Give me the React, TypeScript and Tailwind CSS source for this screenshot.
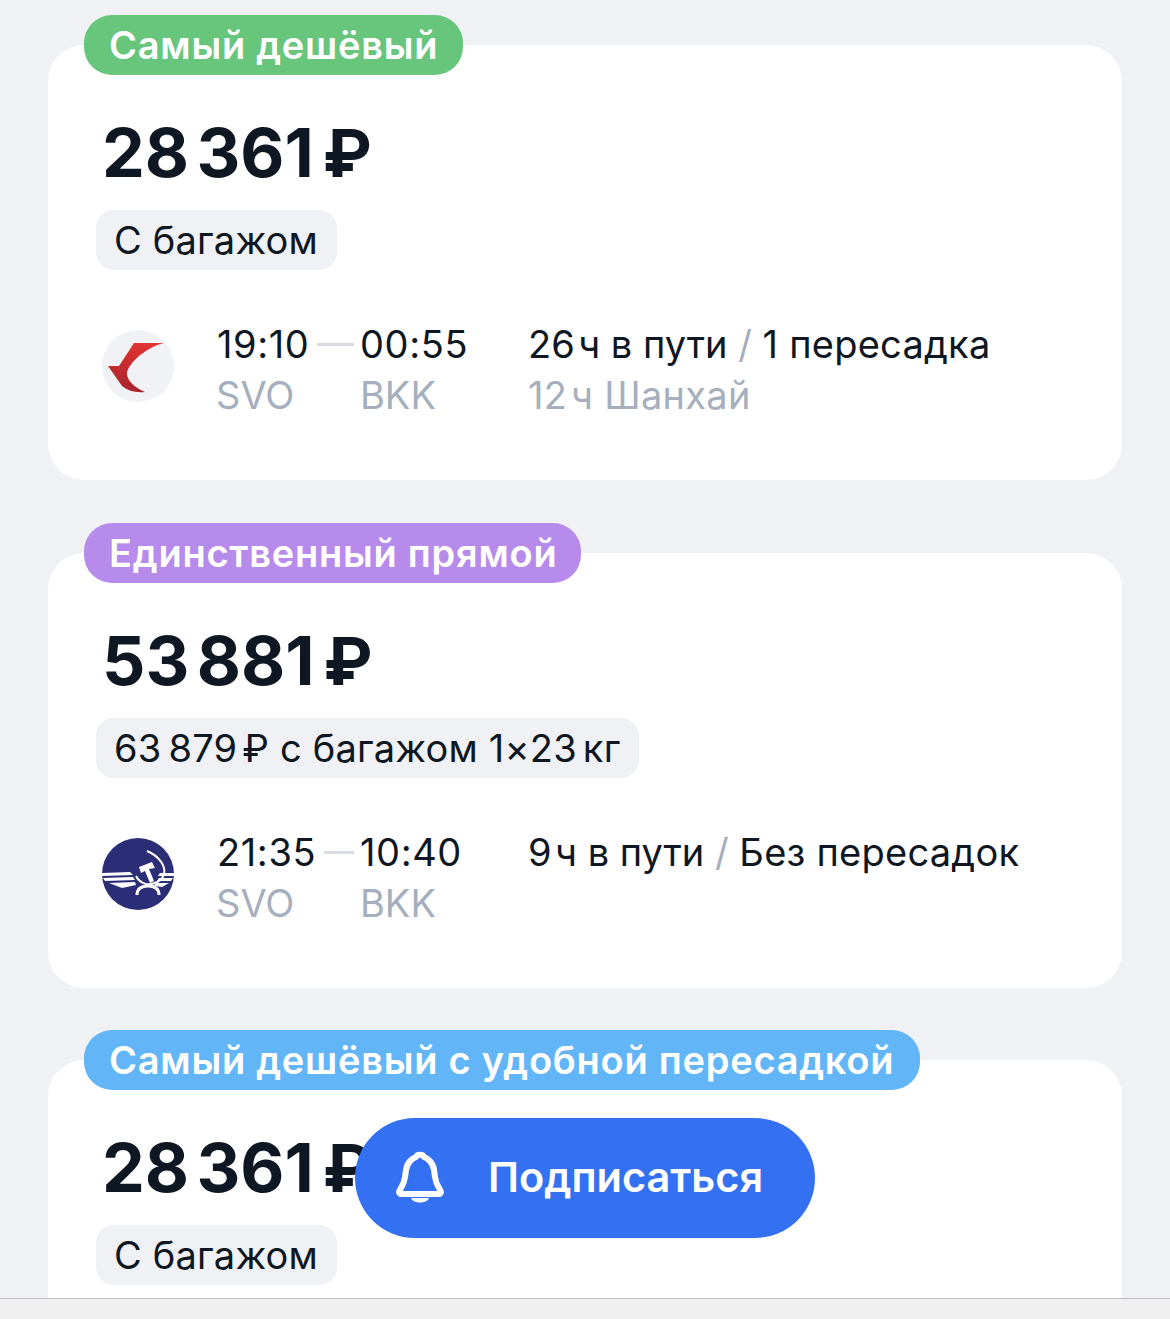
import type { ReactNode } from 'react'

// ─── Airline logos ────────────────────────────────────────────────────────────

function ChinaEasternLogo() {
  return (
    <svg viewBox="0 0 72 72" className="w-[72px] h-[72px] shrink-0">
      <defs>
        <linearGradient id="ce" x1="0.6" y1="0" x2="0.4" y2="1">
          <stop offset="0" stopColor="#e23431" />
          <stop offset="1" stopColor="#a8242c" />
        </linearGradient>
      </defs>
      <circle cx="36" cy="36" r="36" fill="#f1f2f5" />
      <path
        d="M 32 13 L 62 13 C 49 16 30 28 25 42 C 24 50 33 58 43 62 C 34 63 26 61 20 56 L 6 36 L 17 36 Z"
        fill="url(#ce)"
      />
    </svg>
  )
}

function AeroflotLogo() {
  return (
    <svg viewBox="0 0 72 72" className="w-[72px] h-[72px] shrink-0">
      <circle cx="36" cy="36" r="36" fill="#2b2d77" />
      {/* Wings */}
      <path d="M0 35 L28 34 L31 37 L0 38 Z" fill="#fff" />
      <path d="M1 40 L31 39 L33 42 L3 43 Z" fill="#fff" />
      <path d="M7 45 L33 44 L34 47 L20 50 Z" fill="#fff" />
      <path d="M72 35 L58 35 L56 38 L72 38 Z" fill="#fff" />
      <path d="M71 40 L57 40 L55 43 L69 43 Z" fill="#fff" />
      <path d="M67 45 L54 45 L52 48 L60 49 Z" fill="#fff" />
      {/* Sickle */}
      <path d="M45 13 C57 18 64 28 62 36 C60 43 52 47 44 46 C40 45 36 42 34 38" fill="none" stroke="#fff" strokeWidth="2" />
      {/* Hammer */}
      <path d="M37 29 L50 24 L53 30 L47 31 L52 43 L48 45 L43 33 L39 35 Z" fill="#fff" />
      {/* Arch */}
      <path d="M35 57 C35 51 39 48 46 48 C53 48 57 51 57 57" fill="none" stroke="#fff" strokeWidth="3" />
    </svg>
  )
}

// ─── Flight card ──────────────────────────────────────────────────────────────

type Flight = {
  logo: ReactNode
  depart: string
  arrive: string
  duration: string
  stops: string
  layover?: string
}

type Offer = {
  label: string
  labelColor: string
  labelWidth: string
  price: [string, string]
  tag: ReactNode
  flight?: Flight
}

function FlightRow({ flight }: { flight: Flight }) {
  return (
    <div className="flex items-start pl-[54px] pt-[49px] h-[210px] text-[38px] leading-[51px]">
      <div className="mt-[11px]">{flight.logo}</div>
      <div className="ml-[43px] w-[144px] pr-[7px]">
        <div className="flex items-center gap-[8px] text-[#0f1722]">
          <span className="tracking-[0.6px]">{flight.depart}</span>
          <span className="flex-1 h-[3px] bg-[#d8dce2]" />
        </div>
        <div className="text-[#a5afbd] -ml-px">SVO</div>
      </div>
      <div className="w-[168px] -ml-px">
        <div className="text-[#0f1722] tracking-[0.6px]">{flight.arrive}</div>
        <div className="text-[#a5afbd]">BKK</div>
      </div>
      <div>
        <div className="text-[#0f1722] whitespace-nowrap">
          {flight.duration} в пути <span className="text-[#a5afbd]">/</span>{' '}
          <span className="tracking-[0.25px]">{flight.stops}</span>
        </div>
        {flight.layover && <div className="text-[#a5afbd] tracking-[0.3px]">{flight.layover}</div>}
      </div>
    </div>
  )
}

function OfferCard({ offer }: { offer: Offer }) {
  return (
    <div className="relative bg-white rounded-[36px] h-[435px]">
      <div
        className={`absolute left-[36px] -top-[30px] h-[60px] rounded-[28px] pl-[25px] text-white font-semibold tracking-[0.75px] text-[38px] leading-[60px] whitespace-nowrap ${offer.labelColor} ${offer.labelWidth}`}
      >
        {offer.label}
      </div>
      <div className="pl-[54px] pt-[66px] text-[68px] leading-[82px] font-bold text-[#0f1722] whitespace-nowrap">
        {offer.price[0]}
        <span className="ml-[2px]">{offer.price[1]}</span>
        <span className="ml-[9px] text-[66px]">₽</span>
      </div>
      <div className="ml-[48px] mt-[16px] inline-block h-[60px] rounded-[18px] bg-[#eff1f5] pl-[18px] pr-[19px] text-[38px] tracking-[0.2px] leading-[60px] text-[#0f1722] whitespace-nowrap">
        {offer.tag}
      </div>
      {offer.flight && <FlightRow flight={offer.flight} />}
    </div>
  )
}

// ─── Page ─────────────────────────────────────────────────────────────────────

const OFFERS: Offer[] = [
  {
    label: 'Самый дешёвый',
    labelColor: 'bg-[#67c57c]',
    labelWidth: 'w-[379px]',
    price: ['28\u200A', '361'],
    tag: 'С багажом',
    flight: {
      logo: <ChinaEasternLogo />,
      depart: '19:10',
      arrive: '00:55',
      duration: '26\u200Aч',
      stops: '1 пересадка',
      layover: '12\u200Aч Шанхай',
    },
  },
  {
    label: 'Единственный прямой',
    labelColor: 'bg-[#b68bec]',
    labelWidth: 'w-[497px]',
    price: ['53\u200A', '881'],
    tag: (
      <>
        63<span className="ml-[7px]">879</span>
        <span className="ml-[5px]">₽</span> с багажом 1×23
        <span className="ml-[6px]">кг</span>
      </>
    ),
    flight: {
      logo: <AeroflotLogo />,
      depart: '21:35',
      arrive: '10:40',
      duration: '9\u200Aч',
      stops: 'Без пересадок',
    },
  },
  {
    label: 'Самый дешёвый с удобной пересадкой',
    labelColor: 'bg-[#62b6f7]',
    labelWidth: 'w-[836px]',
    price: ['28\u200A', '361'],
    tag: 'С багажом',
  },
]

export default function App() {
  return (
    <div className="relative flex flex-col h-[1319px] overflow-hidden bg-[#eff1f5] font-['Inter',sans-serif]">
      <div className="flex-1 overflow-hidden px-[48px] pt-[45px]">
        <div className="flex flex-col gap-[72.5px]">
          {OFFERS.map((offer) => (
            <OfferCard key={offer.label} offer={offer} />
          ))}
        </div>
      </div>

      <div className="h-[21px] shrink-0 border-t border-[#bfbfc2] bg-[#f0f0f1]" />

      {/* Subscribe button */}
      <div className="absolute left-[355px] top-[1118px] w-[460px] h-[120px] rounded-full bg-[#3371f2] flex items-center text-white">
        <svg viewBox="0 0 48 54" className="ml-[41px] w-[48px] h-[54px]" fill="none">
          <path
            d="M3 41 C3 39 8 35 9 26 L10 19 C11 11 17 7 20 6 C21 3 27 3 28 6 C31 7 37 11 38 19 L39 26 C40 35 45 39 45 41 C45 42 44 43 43 43 L5 43 C4 43 3 42 3 41 Z"
            stroke="#fff"
            strokeWidth="6"
            strokeLinejoin="round"
          />
          <path d="M15 47 L33 47 C31 53 17 53 15 47 Z" fill="#fff" />
        </svg>
        <span className="ml-[44px] text-[41.5px] font-semibold leading-none">Подписаться</span>
      </div>
    </div>
  )
}
